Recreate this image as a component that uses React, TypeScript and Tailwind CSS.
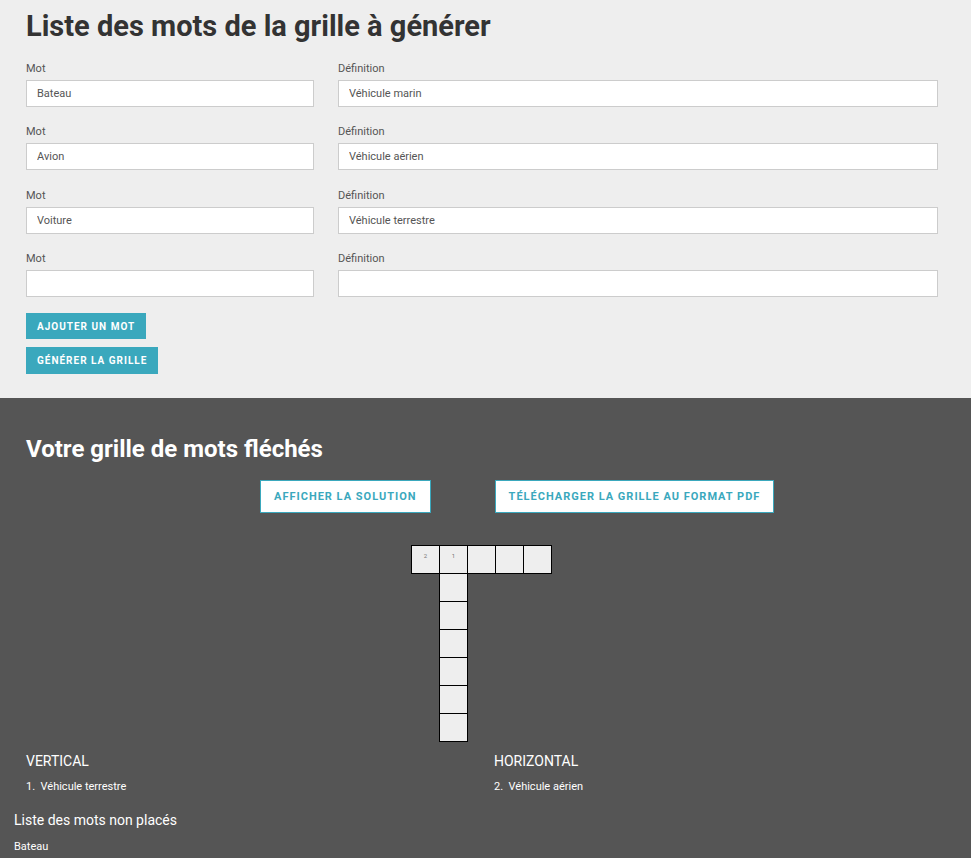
import React from 'react';

const rows = [
  { mot: 'Bateau', def: 'Véhicule marin' },
  { mot: 'Avion', def: 'Véhicule aérien' },
  { mot: 'Voiture', def: 'Véhicule terrestre' },
  { mot: '', def: '' },
];

// [row, col, number]
const cells: [number, number, string][] = [
  [1, 1, '2'],
  [1, 2, '1'],
  [1, 3, ''],
  [1, 4, ''],
  [1, 5, ''],
  [2, 2, ''],
  [3, 2, ''],
  [4, 2, ''],
  [5, 2, ''],
  [6, 2, ''],
  [7, 2, ''],
];

export default function App() {
  return (
    <div className="min-h-screen bg-[#555555] font-['Roboto',sans-serif]">
      {/* Formulaire */}
      <div className="bg-[#eeeeee] px-[26px] pt-2 pb-6">
        <h1 className="text-[29px] leading-[36px] font-bold text-[#333333] mb-[18px]">
          Liste des mots de la grille à générer
        </h1>

        {rows.map((r, i) => (
          <div key={i} className="flex gap-6 mb-[18.33px]">
            <div className="w-[288px]">
              <label className="block text-[11px] leading-[14px] text-[#555555] mb-[4px]">Mot</label>
              <input
                defaultValue={r.mot}
                className="w-full h-[27px] bg-white border border-[#cccccc] px-[10px] text-[11px] text-[#555555] outline-none"
              />
            </div>
            <div className="w-[600px]">
              <label className="block text-[11px] leading-[14px] text-[#555555] mb-[4px]">Définition</label>
              <input
                defaultValue={r.def}
                className="w-full h-[27px] bg-white border border-[#cccccc] px-[10px] text-[11px] text-[#555555] outline-none"
              />
            </div>
          </div>
        ))}

        <div className="flex flex-col items-start gap-2 -mt-[2px]">
          <button className="h-[26px] px-[11px] bg-[#3aa8bd] text-white text-[10px] font-bold tracking-[1px]">
            AJOUTER UN MOT
          </button>
          <button className="h-[27px] px-[11px] bg-[#3aa8bd] text-white text-[10px] font-bold tracking-[1px]">
            GÉNÉRER LA GRILLE
          </button>
        </div>
      </div>

      {/* Grille */}
      <div className="px-[26px] pt-[37px] text-white">
        <h2 className="text-[24px] leading-[28px] font-bold">Votre grille de mots fléchés</h2>

        <div className="flex gap-16 ml-[234px] mt-[17px]">
          <button className="h-[33px] px-[13px] bg-white border border-[#3aa8bd] text-[#3aa8bd] text-[11px] font-bold tracking-[1px]">
            AFFICHER LA SOLUTION
          </button>
          <button className="h-[33px] px-[13px] bg-white border border-[#3aa8bd] text-[#3aa8bd] text-[11px] font-bold tracking-[1px]">
            TÉLÉCHARGER LA GRILLE AU FORMAT PDF
          </button>
        </div>

        <div className="grid grid-cols-[repeat(5,28px)] grid-rows-[repeat(7,28px)] ml-[385px] mt-8 w-[141px] h-[197px]">
          {cells.map(([r, c, n], i) => (
            <div
              key={i}
              style={{ gridRow: r, gridColumn: c }}
              className="w-[29px] h-[29px] border border-black bg-[#eeeeee] flex justify-center"
            >
              <span className="text-[6px] leading-[6px] text-[#777777] mt-[7px]">{n}</span>
            </div>
          ))}
        </div>

        <div className="flex mt-[10px]">
          <div className="w-[468px]">
            <h3 className="text-[14px] leading-[18px]">VERTICAL</h3>
            <p className="text-[11px] leading-[14px] mt-[10px]">1.&nbsp; Véhicule terrestre</p>
          </div>
          <div>
            <h3 className="text-[14px] leading-[18px]">HORIZONTAL</h3>
            <p className="text-[11px] leading-[14px] mt-[10px]">2.&nbsp; Véhicule aérien</p>
          </div>
        </div>
      </div>

      <div className="px-[14px] pt-[17px] pb-2 text-white">
        <h4 className="text-[14px] leading-[18px]">Liste des mots non placés</h4>
        <p className="text-[11px] leading-[14px] mt-[11px]">Bateau</p>
      </div>
    </div>
  );
}
